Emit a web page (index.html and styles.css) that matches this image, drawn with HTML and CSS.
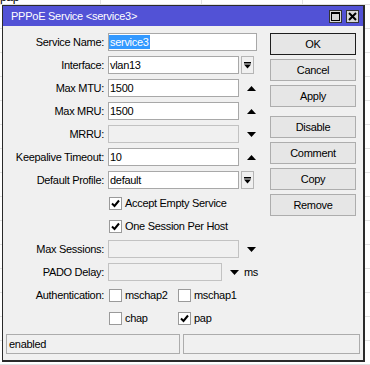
FILE: index.html
```html
<!DOCTYPE html>
<html lang="en">
<head>
  <meta charset="UTF-8" />
  <title>PPPoE Service &lt;service3&gt;</title>
  <link rel="stylesheet" href="styles.css">
</head>
<body>
  <div class="backdrop">
    <div class="bg-row bg-top"><span class="bg-cell">pap</span><span class="bg-cell"></span><span class="bg-cell"></span></div>
    <div class="bg-row"></div><div class="bg-row"></div><div class="bg-row"></div><div class="bg-row"></div>
    <div class="bg-row"></div><div class="bg-row"></div><div class="bg-row"></div><div class="bg-row"></div>
    <div class="bg-row"></div><div class="bg-row"></div><div class="bg-row"></div><div class="bg-row"></div>
    <div class="bg-row"></div><div class="bg-row"></div><div class="bg-row"></div><div class="bg-row"></div>
  </div>

  <div class="window">
    <div class="titlebar">
      <span class="title">PPPoE Service &lt;service3&gt;</span>
      <div class="tb-btns">
        <span class="tb-btn"><svg width="9" height="9" viewBox="0 0 9 9"><rect x="0.5" y="0.5" width="8" height="8" fill="none" stroke="#000"/><rect x="0" y="0" width="9" height="2" fill="#000"/></svg></span>
        <span class="tb-btn"><svg width="9" height="9" viewBox="0 0 9 9"><path d="M1 1 L8 8 M8 1 L1 8" stroke="#000" stroke-width="2"/></svg></span>
      </div>
    </div>

    <div class="body">
      <div class="form">
        <div class="row">
          <label class="lbl">Service Name:</label>
          <div class="field wide"><span class="sel">service3</span></div>
        </div>
        <div class="row">
          <label class="lbl">Interface:</label>
          <div class="field">vlan13</div>
          <span class="dd"><svg width="7" height="7" viewBox="0 0 7 7"><rect x="0" y="0" width="7" height="1.5" fill="#000"/><path d="M0 2.5 L7 2.5 L3.5 6.5 Z" fill="#000"/></svg></span>
        </div>
        <div class="row">
          <label class="lbl">Max MTU:</label>
          <div class="field">1500</div>
          <span class="spin"><svg width="9" height="5" viewBox="0 0 9 5"><path d="M0 5 L9 5 L4.5 0 Z" fill="#000"/></svg></span>
        </div>
        <div class="row">
          <label class="lbl">Max MRU:</label>
          <div class="field">1500</div>
          <span class="spin"><svg width="9" height="5" viewBox="0 0 9 5"><path d="M0 5 L9 5 L4.5 0 Z" fill="#000"/></svg></span>
        </div>
        <div class="row">
          <label class="lbl">MRRU:</label>
          <div class="field disabled"></div>
          <span class="spin"><svg width="9" height="5" viewBox="0 0 9 5"><path d="M0 0 L9 0 L4.5 5 Z" fill="#000"/></svg></span>
        </div>
        <div class="row">
          <label class="lbl">Keepalive Timeout:</label>
          <div class="field">10</div>
          <span class="spin"><svg width="9" height="5" viewBox="0 0 9 5"><path d="M0 5 L9 5 L4.5 0 Z" fill="#000"/></svg></span>
        </div>
        <div class="row">
          <label class="lbl">Default Profile:</label>
          <div class="field">default</div>
          <span class="dd"><svg width="7" height="7" viewBox="0 0 7 7"><rect x="0" y="0" width="7" height="1.5" fill="#000"/><path d="M0 2.5 L7 2.5 L3.5 6.5 Z" fill="#000"/></svg></span>
        </div>
        <div class="row">
          <label class="lbl"></label>
          <span class="cb checked"><svg width="9" height="9" viewBox="0 0 9 9"><path d="M1 4.5 L3.5 7 L8 1.5" fill="none" stroke="#000" stroke-width="2"/></svg></span>
          <span class="cb-text">Accept Empty Service</span>
        </div>
        <div class="row">
          <label class="lbl"></label>
          <span class="cb checked"><svg width="9" height="9" viewBox="0 0 9 9"><path d="M1 4.5 L3.5 7 L8 1.5" fill="none" stroke="#000" stroke-width="2"/></svg></span>
          <span class="cb-text">One Session Per Host</span>
        </div>
        <div class="row">
          <label class="lbl">Max Sessions:</label>
          <div class="field disabled"></div>
          <span class="spin"><svg width="9" height="5" viewBox="0 0 9 5"><path d="M0 0 L9 0 L4.5 5 Z" fill="#000"/></svg></span>
        </div>
        <div class="row">
          <label class="lbl">PADO Delay:</label>
          <div class="field disabled short"></div>
          <span class="spin"><svg width="9" height="5" viewBox="0 0 9 5"><path d="M0 0 L9 0 L4.5 5 Z" fill="#000"/></svg></span>
          <span class="unit">ms</span>
        </div>
        <div class="row">
          <label class="lbl">Authentication:</label>
          <div class="opt"><span class="cb"></span><span class="cb-text">mschap2</span></div>
          <div class="opt"><span class="cb"></span><span class="cb-text">mschap1</span></div>
        </div>
        <div class="row">
          <label class="lbl"></label>
          <div class="opt"><span class="cb"></span><span class="cb-text">chap</span></div>
          <div class="opt"><span class="cb checked"><svg width="9" height="9" viewBox="0 0 9 9"><path d="M1 4.5 L3.5 7 L8 1.5" fill="none" stroke="#000" stroke-width="2"/></svg></span><span class="cb-text">pap</span></div>
        </div>
      </div>

      <div class="buttons">
        <div class="btn default">OK</div>
        <div class="btn">Cancel</div>
        <div class="btn">Apply</div>
        <div class="btn group">Disable</div>
        <div class="btn">Comment</div>
        <div class="btn">Copy</div>
        <div class="btn">Remove</div>
      </div>
    </div>

    <div class="statusbar">
      <div class="status first">enabled</div>
      <div class="status"></div>
    </div>
  </div>
</body>
</html>
```

FILE: styles.css
```css
body {
  margin: 0;
  background: #fff;
  font-family: "Liberation Sans", Arial, sans-serif;
  font-size: 11px;
  letter-spacing: -0.3px;
  color: #000;
  overflow: hidden;
}

.backdrop {
  height: 365px;
  overflow: hidden;
}
.bg-row {
  height: 23px;
  border-bottom: 1px solid #e2e2e2;
  display: flex;
}
.bg-top {
  height: 14px;
  margin-top: -10px;
}
.bg-cell {
  width: 100px;
  border-right: 1px solid #e2e2e2;
  line-height: 14px;
  font-size: 12px;
}

.window {
  position: absolute;
  left: 2px;
  top: 5px;
  width: 363px;
  height: 357px;
  box-sizing: border-box;
  background: #f0f0f0;
  border: 1px solid #2a2a2a;
  border-right-width: 2px;
  border-bottom-width: 2px;
  display: flex;
  flex-direction: column;
}

.titlebar {
  height: 20px;
  background: #5252d6;
  display: flex;
  align-items: center;
  justify-content: space-between;
  padding: 0 4px 0 8px;
}
.title {
  color: #fff;
  font-size: 11px;
  letter-spacing: -0.25px;
}
.tb-btns {
  display: flex;
  gap: 4px;
  padding-top: 1px;
}
.tb-btn {
  width: 13px;
  height: 13px;
  box-sizing: border-box;
  background: #d8d8d8;
  border: 1px solid #333;
  display: flex;
  align-items: center;
  justify-content: center;
}

.body {
  display: flex;
  justify-content: space-between;
  padding: 7px 7px 0 0;
}

.form {
  display: flex;
  flex-direction: column;
  gap: 5px;
}
.row {
  display: flex;
  align-items: center;
  height: 18px;
}
.lbl {
  width: 101px;
  margin-right: 4px;
  text-align: right;
  white-space: nowrap;
}

.field {
  width: 131px;
  height: 18px;
  box-sizing: border-box;
  background: #fff;
  border: 1px solid #a8a8a8;
  padding-left: 1px;
  line-height: 16px;
  white-space: nowrap;
}
.field.wide {
  width: 149px;
  padding-left: 0;
}
.field.short {
  width: 114px;
}
.field.disabled {
  background: #f0f0f0;
  border-color: #c2c2c2;
}
.sel {
  background: #3399ff;
  color: #fff;
  display: inline-block;
  line-height: 14px;
  padding: 0 1px;
}

.dd {
  width: 13px;
  height: 18px;
  box-sizing: border-box;
  margin-left: 2px;
  border: 1px solid #b5b5b5;
  background: #f0f0f0;
  display: flex;
  align-items: center;
  justify-content: center;
}
.spin {
  margin-left: 8px;
  display: flex;
}
.unit {
  margin-left: 5px;
}

.cb {
  width: 13px;
  height: 13px;
  box-sizing: border-box;
  margin-left: 1px;
  background: #fff;
  border: 1px solid #9a9a9a;
  display: flex;
  align-items: center;
  justify-content: center;
}
.cb-text {
  margin-left: 3px;
  white-space: nowrap;
}
.opt {
  width: 69px;
  display: flex;
  align-items: center;
}

.buttons {
  width: 86px;
  display: flex;
  flex-direction: column;
  gap: 4px;
}
.btn {
  height: 22px;
  box-sizing: border-box;
  border: 1px solid #adadad;
  background: #e6e6e6;
  text-align: center;
  line-height: 20px;
}
.btn.default {
  border-color: #1e1e1e;
}
.btn.group {
  margin-top: 5px;
}

.statusbar {
  margin-top: auto;
  display: flex;
  gap: 3px;
  padding: 0 3px 6px 3px;
}
.status {
  flex: 1;
  height: 20px;
  box-sizing: border-box;
  border: 1px solid #acacac;
  padding-left: 2px;
  line-height: 18px;
}
.status.first {
  flex: none;
  width: 174px;
}
```
